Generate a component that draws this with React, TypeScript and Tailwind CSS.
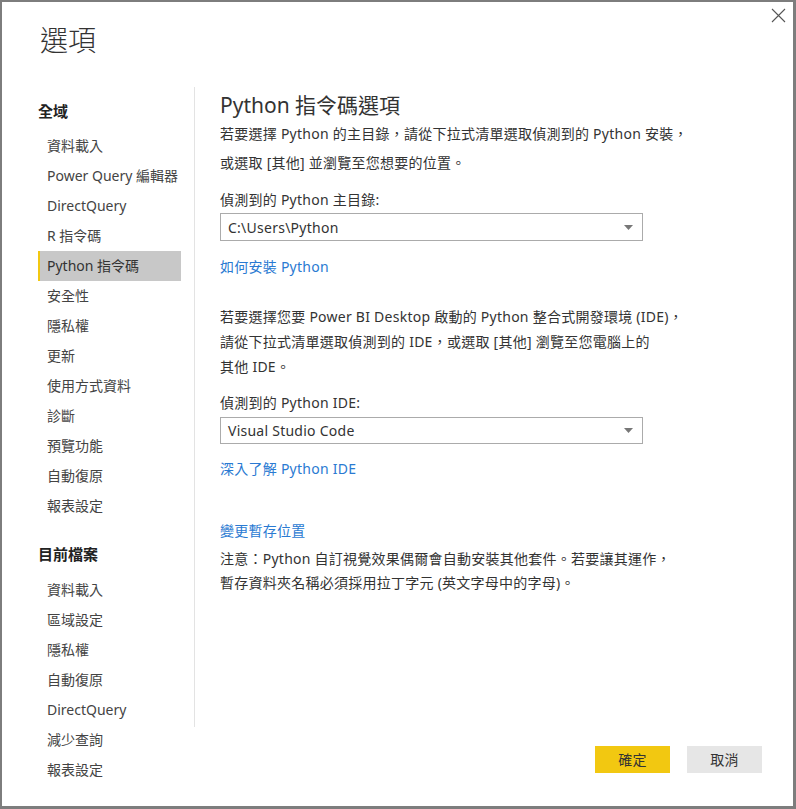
import React from 'react';

const FONT = '"Noto Sans", "Noto Sans CJK TC", sans-serif';

const globalItems = [
  '資料載入',
  'Power Query 編輯器',
  'DirectQuery',
  'R 指令碼',
  'Python 指令碼',
  '安全性',
  '隱私權',
  '更新',
  '使用方式資料',
  '診斷',
  '預覽功能',
  '自動復原',
  '報表設定',
];

const fileItems = ['資料載入', '區域設定', '隱私權', '自動復原', 'DirectQuery', '減少查詢', '報表設定'];

function NavItem({ label, active }: { label: string; active?: boolean }) {
  return (
    <div
      className={
        active
          ? 'h-[30px] w-[143px] whitespace-nowrap border-l-2 border-[#f2c811] bg-[#c8c8c8] pl-[7px] text-[14px] leading-[30px] text-[#333]'
          : 'h-[30px] w-[143px] whitespace-nowrap border-l-2 border-transparent pl-[7px] text-[14px] leading-[30px] text-[#444]'
      }
    >
      {label}
    </div>
  );
}

function Dropdown({ value, tall }: { value: string; tall?: boolean }) {
  return (
    <div
      className={
        (tall ? 'h-[28px] ' : 'h-[27px] ') +
        'flex w-[423px] items-center justify-between border border-[#ababab] bg-white pl-[7px] pr-[9px]'
      }
    >
      <span className="text-[14px] text-[#333]">{value}</span>
      <svg width="9" height="5" viewBox="0 0 9 5">
        <path d="M0 0 L9 0 L4.5 5 Z" fill="#777" />
      </svg>
    </div>
  );
}

export default function App() {
  return (
    <div
      lang="zh-Hant-TW"
      className="relative flex h-[809px] w-[796px] flex-col border-t-2 border-r-[3px] border-b-[3px] border-l-2 border-[#7d7d7d] bg-white"
      style={{ fontFamily: FONT }}
    >
      <button type="button" className="absolute top-[6px] right-[7px] p-0">
        <svg width="15" height="15" viewBox="0 0 15 15">
          <path d="M1 1 L14 14 M14 1 L1 14" stroke="#555" strokeWidth="1.1" />
        </svg>
      </button>

      <div className="h-[85px] pt-[18px] pl-[38px]">
        <h1 className="h-[40px] text-[28px] leading-[40px] font-light text-[#333]">選項</h1>
      </div>

      <div className="flex flex-1">
        <nav className="w-[192px] pt-[9px] pl-[36px]">
          <div className="h-[30px] text-[15px] leading-[30px] font-bold text-[#222]">全域</div>
          <div className="mt-[5px]">
            {globalItems.map((item) => (
              <NavItem key={item} label={item} active={item === 'Python 指令碼'} />
            ))}
          </div>
          <div className="mt-[18px] h-[30px] text-[15px] leading-[30px] font-bold text-[#222]">目前檔案</div>
          <div className="mt-[6px]">
            {fileItems.map((item) => (
              <NavItem key={item} label={item} />
            ))}
          </div>
        </nav>

        <div className="h-[640px] w-px self-start bg-[#e3e3e3]" />

        <main className="flex flex-1 flex-col pl-[25px] pr-[31px] pb-[33px] tracking-[0.25px] text-[#333]">
          <h2 className="mt-[4px] h-[28px] text-[21px] leading-[28px] tracking-normal text-[#333]">Python 指令碼選項</h2>
          <p className="text-[14px] leading-[29px]">
            若要選擇 Python 的主目錄，請從下拉式清單選取偵測到的 Python 安裝，
            <br />
            或選取 [其他] 並瀏覽至您想要的位置。
          </p>

          <div className="mt-[13px] text-[14px] leading-[20px]">偵測到的 Python 主目錄:</div>
          <div className="mt-[3px]">
            <Dropdown value="C:\Users\Python" tall />
          </div>
          <a className="mt-[16px] text-[14px] leading-[20px] text-[#2a7ad2]">如何安裝 Python</a>

          <p className="mt-[27px] text-[14px] leading-[25px]">
            若要選擇您要 Power BI Desktop 啟動的 Python 整合式開發環境 (IDE)，
            <br />
            請從下拉式清單選取偵測到的 IDE，或選取 [其他] 瀏覽至您電腦上的
            <br />
            其他 IDE。
          </p>

          <div className="mt-[14px] text-[14px] leading-[20px]">偵測到的 Python IDE:</div>
          <div className="mt-[4px]">
            <Dropdown value="Visual Studio Code" />
          </div>
          <a className="mt-[15px] text-[14px] leading-[20px] text-[#2a7ad2]">深入了解 Python IDE</a>

          <a className="mt-[42px] text-[14px] leading-[20px] text-[#2a7ad2]">變更暫存位置</a>
          <p className="mt-[6px] text-[14px] leading-[24px]">
            注意：Python 自訂視覺效果偶爾會自動安裝其他套件。若要讓其運作，
            <br />
            暫存資料夾名稱必須採用拉丁字元 (英文字母中的字母)。
          </p>

          <div className="mt-auto flex justify-end gap-[17px]">
            <button type="button" className="h-[27px] w-[75px] bg-[#f2c811] text-[14px] text-[#333]">
              確定
            </button>
            <button type="button" className="h-[27px] w-[75px] bg-[#e6e6e6] text-[14px] text-[#333]">
              取消
            </button>
          </div>
        </main>
      </div>
    </div>
  );
}
